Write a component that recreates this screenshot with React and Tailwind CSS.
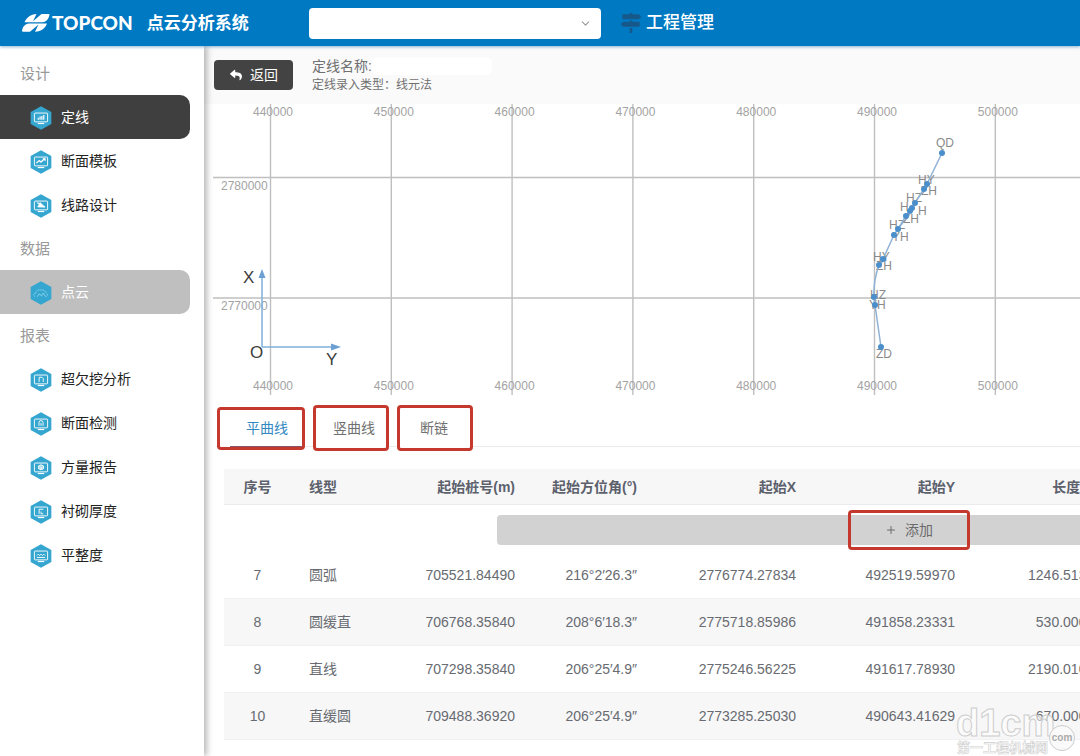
import React from "react";
import { FaReply, FaMapSigns } from "react-icons/fa";
import { ChevronDown, Plus } from "lucide-react";

const glyphs = {
  bars: <path d="M9 14.800v-2M11 14.800v-3.500M13 14.800v-4M15 14.800v-5" strokeWidth="1.300" />,
  line: <path d="M7 14l3-2.500 2 1.500 4.500-4M14 9.500h2.500v2" strokeWidth="1.400" />,
  route: <path d="M7.500 9.500l3 .5 1 3.500 5 .5M8.500 14h7.500l-5-4.500z" fill="white" />,
  doc: <path d="M10 15v-5h3l1.500 1.500V15" />,
  section: <path d="M9.800 15v-3.500a2.200 2.200 0 0 1 4.400 0V15M12 12v3" />,
  volume: <path d="M12 9.500l2.800 1.400v2.800L12 15l-2.800-1.300v-2.800zM12 12v3" fill="white" fillOpacity=".6" />,
  lining: <path d="M10 15v-5h4.500M12 12.500V15h2.500" />,
  flat: <path d="M7.500 12.500L9 11l1.500 1.500L12 11l1.500 1.500L15 11l1.500 1.500M7.500 14.600h9" />,
};

function HexIcon({ kind }) {
  return (
    <svg viewBox="0 0 24 26" className="mt-[2px] h-6 w-[22px] shrink-0" aria-hidden="true">
      <path d="M12 .3 L23.300 6.400 V19.600 L12 25.700 L.7 19.600 V6.400Z" fill="#35a6cf" />
      {kind === "cloud" ? (
        <g fill="none" stroke="#8fd6ee" strokeWidth="1">
          <path d="M5.500 17c-2-1-1.500-4 1-4.200C7 10 9.500 8.500 12 10c2-1 4.600.2 5 2.400 2.400.4 2.800 3.600 1 4.600" strokeDasharray="1.600 .8" />
          <path d="M8 17l2-3 2.500 2 2-3 2.500 4" />
        </g>
      ) : (
        <g fill="none" stroke="white" strokeWidth="1" strokeLinejoin="round">
          <rect x="4.800" y="7.600" width="14.400" height="9.600" rx=".8" />
          <path d="M8.500 19h7" strokeWidth="1.300" />
          {glyphs[kind]}
        </g>
      )}
    </svg>
  );
}

const menu = [
  { title: "设计", items: [["定线", "bars", "active"], ["断面模板", "line"], ["线路设计", "route"]] },
  { title: "数据", items: [["点云", "cloud", "muted"]] },
  {
    title: "报表",
    items: [
      ["超欠挖分析", "doc"],
      ["断面检测", "section"],
      ["方量报告", "volume"],
      ["衬砌厚度", "lining"],
      ["平整度", "flat"],
    ],
  },
];

const itemStyle = {
  active: "bg-[#3f3f3f] text-white",
  muted: "bg-[#bfbfbf] text-white",
  normal: "text-[#222]",
};

function Sidebar() {
  return (
    <nav className="relative z-10 w-[204px] shrink-0 bg-white pt-[6px] shadow-[3px_0_6px_rgba(0,0,0,0.28)]">
      {menu.map((group) => (
        <section key={group.title}>
          <h2 className="flex h-[43px] items-center pl-5 pt-px text-[15px] text-[#999]">{group.title}</h2>
          <ul>
            {group.items.map(([label, kind, state]) => (
              <li key={label}>
                <a
                  href="#"
                  className={`mr-[14px] flex h-11 items-center gap-[9px] rounded-r-[10px] pl-[30px] text-sm ${itemStyle[state || "normal"]}`}
                >
                  <HexIcon kind={kind} />
                  {label}
                </a>
              </li>
            ))}
          </ul>
        </section>
      ))}
    </nav>
  );
}

const columns = [440000, 450000, 460000, 470000, 480000, 490000, 500000];
const points = [
  [729, 49], [714, 80], [711, 85], [702, 99], [699, 104], [697, 107], [693, 112],
  [685, 125], [681, 131], [670, 155], [666, 161], [661, 193], [662, 201], [668, 243],
];
const marks = [
  ["QD", 723, 43], ["HY", 705, 80], ["ZH", 708, 91], ["HZ", 693, 98], ["H", 687, 107],
  ["H", 705, 111], ["ZH", 690, 119], ["HZ", 676, 125], ["YH", 679, 137], ["HY", 660, 157],
  ["ZH", 663, 166], ["HZ", 657, 195], ["YH", 656, 205], ["ZD", 663, 254],
];

function AlignmentChart() {
  return (
    <svg className="ml-[9px] block h-[292px] w-full font-['Liberation_Sans',sans-serif] text-xs" role="img" aria-label="定线">
      <g stroke="#bfbfbf" strokeWidth="1.400">
        {columns.map((c, i) => (
          <line key={c} x1={57.5 + i * 120.8} x2={57.5 + i * 120.8} y1="0" y2="291" />
        ))}
        <line x1="0" x2="100%" y1="73.500" y2="73.500" />
        <line x1="0" x2="100%" y1="194" y2="194" />
      </g>
      <g fill="#a3a3a3">
        {columns.map((c, i) => (
          <React.Fragment key={c}>
            <text x={40 + i * 120.8} y="12">{c}</text>
            <text x={40 + i * 120.8} y="286">{c}</text>
          </React.Fragment>
        ))}
        <text x="8" y="86">2780000</text>
        <text x="8" y="206">2770000</text>
      </g>
      <g stroke="#7fb0dc" strokeWidth="1.500" fill="#6c9fd2">
        <path d="M49 243V174M49 243H118" fill="none" />
        <path d="M49 165l3.500 9h-7zM128 243l-10 3.500v-7z" stroke="none" />
      </g>
      <g fill="#3c3c3c" className="text-[17px]">
        <text x="30" y="179">X</text>
        <text x="37" y="254">O</text>
        <text x="113" y="261">Y</text>
      </g>
      <g fill="#8a8a8a">
        {marks.map(([t, x, y]) => (
          <text key={`${x}-${y}`} x={x} y={y}>{t}</text>
        ))}
      </g>
      <path
        d="M729 49 L714 80 L702 99 L693 112 L681 131 L670 155 L666 161 Q660 178 661 193 Q661 197 662 201 L668 243"
        fill="none"
        stroke="#8fb2d6"
        strokeWidth="1.500"
      />
      <g fill="#4a8fcb">
        {points.map(([x, y]) => (
          <circle key={`${x}-${y}`} cx={x} cy={y} r="3" />
        ))}
      </g>
    </svg>
  );
}

const rows = [
  ["7", "圆弧", "705521.84490", "216°2′26.3″", "2776774.27834", "492519.59970", "1246.51300"],
  ["8", "圆缓直", "706768.35840", "208°6′18.3″", "2775718.85986", "491858.23331", "530.00000"],
  ["9", "直线", "707298.35840", "206°25′4.9″", "2775246.56225", "491617.78930", "2190.01000"],
  ["10", "直缓圆", "709488.36920", "206°25′4.9″", "2773285.25030", "490643.41629", "670.00000"],
];
const heads = ["序号", "线型", "起始桩号(m)", "起始方位角(°)", "起始X", "起始Y", "长度(m)"];

const align = (i) => (i === 0 ? "text-center" : i === 1 ? "pl-[18px] text-left" : "pr-[18px] text-right");

function CurveTable() {
  return (
    <table className="ml-[20px] mt-[18px] w-[1370px] table-fixed border-collapse text-sm text-[#686b71]">
      <colgroup>
        <col className="w-[67px]" />
        <col className="w-[90px]" />
        <col className="w-[152px]" />
        <col className="w-[122px]" />
        <col className="w-[159px]" />
        <col className="w-[159px]" />
        <col className="w-[147px]" />
        <col />
      </colgroup>
      <thead>
        <tr className="h-9 bg-[#f7f7f8] text-[#5c616c] shadow-[inset_0_-1px_0_#ebebee]">
          {heads.map((h, i) => (
            <th key={h} scope="col" className={`whitespace-nowrap font-bold ${align(i)}`}>{h}</th>
          ))}
          <td />
        </tr>
      </thead>
      <tbody>
        <tr className="h-[47px]">
          <td colSpan={8}>
            <button className="ml-[273px] mt-[3px] flex h-[30px] w-[824px] items-center justify-center rounded bg-[#d2d2d2] text-[#6a6a6a]">
              <span className="relative flex items-center gap-2">
                <Plus size={12} strokeWidth={2} />
                添加
                <span className="absolute -inset-x-[37px] -inset-y-[10px] rounded border-3 border-[#c5382d]" />
              </span>
            </button>
          </td>
        </tr>
        {rows.map((r) => (
          <tr key={r[0]} className="h-[47px] even:bg-white odd:bg-[#f7f7f8] shadow-[inset_0_-1px_0_#f1f1f3]">
            {r.map((v, i) => (
              <td key={i} className={`pb-[2px] ${align(i)}`}>{v}</td>
            ))}
            <td />
          </tr>
        ))}
      </tbody>
    </table>
  );
}

function Tabs() {
  const box = "rounded border-3 border-[#c5382d] bg-white text-left";
  return (
    <div className="relative mt-[9px] pl-[13px]">
      <div className="absolute left-3 right-0 bottom-1 h-px bg-[#ebebed]" />
      <div role="tablist" className="relative flex items-center gap-2 text-sm text-[#707070]">
        <button role="tab" aria-selected="true" className={`${box} relative h-[43px] w-[88px] pl-[26px] text-[#3488c0]`}>
          平曲线
          <span className="absolute bottom-0 left-[10px] right-0 h-px bg-[#8a5468]" />
        </button>
        <button role="tab" aria-selected="false" className={`${box} h-[46px] w-[76px] pl-[17px]`}>竖曲线</button>
        <button role="tab" aria-selected="false" className={`${box} h-[46px] w-[76px] pl-5`}>断链</button>
      </div>
    </div>
  );
}

function Watermark() {
  return (
    <svg viewBox="0 0 126 52" className="absolute bottom-0 right-0 h-[52px] w-[126px]" aria-hidden="true">
      <g fill="#ffffff" fillOpacity=".55" stroke="#cdcdcd" strokeWidth="1" className="font-['Liberation_Sans',sans-serif] font-bold">
        <text x="2" y="32" fontSize="38">d1cm</text>
      </g>
      <text x="3" y="48" fontSize="13" fill="#fdfdfd" stroke="#d0d0d0" strokeWidth=".6" className="font-['Noto_Sans_CJK_SC',sans-serif] font-bold">
        第一工程机械网
      </text>
      <circle cx="108" cy="34" r="12.500" fill="#fafafa" stroke="#cccccc" />
      <text x="108" y="37" fontSize="10" textAnchor="middle" fill="#aaa" className="font-['Liberation_Sans',sans-serif] font-bold">com</text>
    </svg>
  );
}

export default function App() {
  return (
    <div className="relative flex min-h-screen flex-col overflow-hidden bg-white font-['Liberation_Sans','Noto_Sans_CJK_SC',sans-serif]">
      <header className="relative z-20 flex h-[46px] shrink-0 items-center bg-[#0079c3] pl-[22px] text-white shadow-[0_1px_3px_rgba(0,90,160,0.45)]">
        <svg viewBox="0 0 28 18" className="h-[18px] w-7 shrink-0" fill="white" aria-hidden="true">
          <path d="M2.500 8.300C4.500 3.500 8.500.3 14.500 0L11 7.300 19.500 0H27.500C27 4.500 24.500 8 20.500 8.300z" />
          <path d="M0 17.500C.2 13 3 9.800 7 9.500H25C23.300 14 19.500 17.500 13 17.800L16.500 10.500 8 17.800H2z" />
        </svg>
        <span className="ml-[2px] font-['Lato',sans-serif] text-[19px] font-black">TOPCON</span>
        <h1 className="ml-[14px] pt-[2px] text-[17px] font-bold">点云分析系统</h1>
        <div className="absolute left-[309px] flex items-center">
          <div className="relative">
            <select aria-label="工程" className="block h-[31px] w-[292px] appearance-none rounded bg-white px-3 text-sm text-[#333]" />
            <ChevronDown size={13} className="pointer-events-none absolute right-[9px] top-[9px] text-[#999]" />
          </div>
          <a href="#" className="ml-5 flex items-center gap-[5px] text-[17px] font-medium">
            <FaMapSigns size={20} className="text-[#17588a]" />
            工程管理
          </a>
        </div>
      </header>
      <div className="flex flex-1">
        <Sidebar />
        <main className="min-w-0 flex-1 overflow-hidden">
          <div className="flex h-[58px] items-center gap-[19px] bg-[#fafafb] pl-[10px]">
            <button className="flex h-[30px] w-[79px] items-center gap-2 rounded bg-[#434343] pl-4 text-sm text-white">
              <FaReply size={12} />
              返回
            </button>
            <div className="text-[#707070]">
              <p className="flex items-center text-sm leading-5">
                定线名称:
                <span className="h-[18px] w-[120px] rounded-md bg-white" />
              </p>
              <p className="text-xs leading-[18px]">定线录入类型：线元法</p>
            </div>
          </div>
          <AlignmentChart />
          <Tabs />
          <CurveTable />
        </main>
      </div>
      <Watermark />
    </div>
  );
}
